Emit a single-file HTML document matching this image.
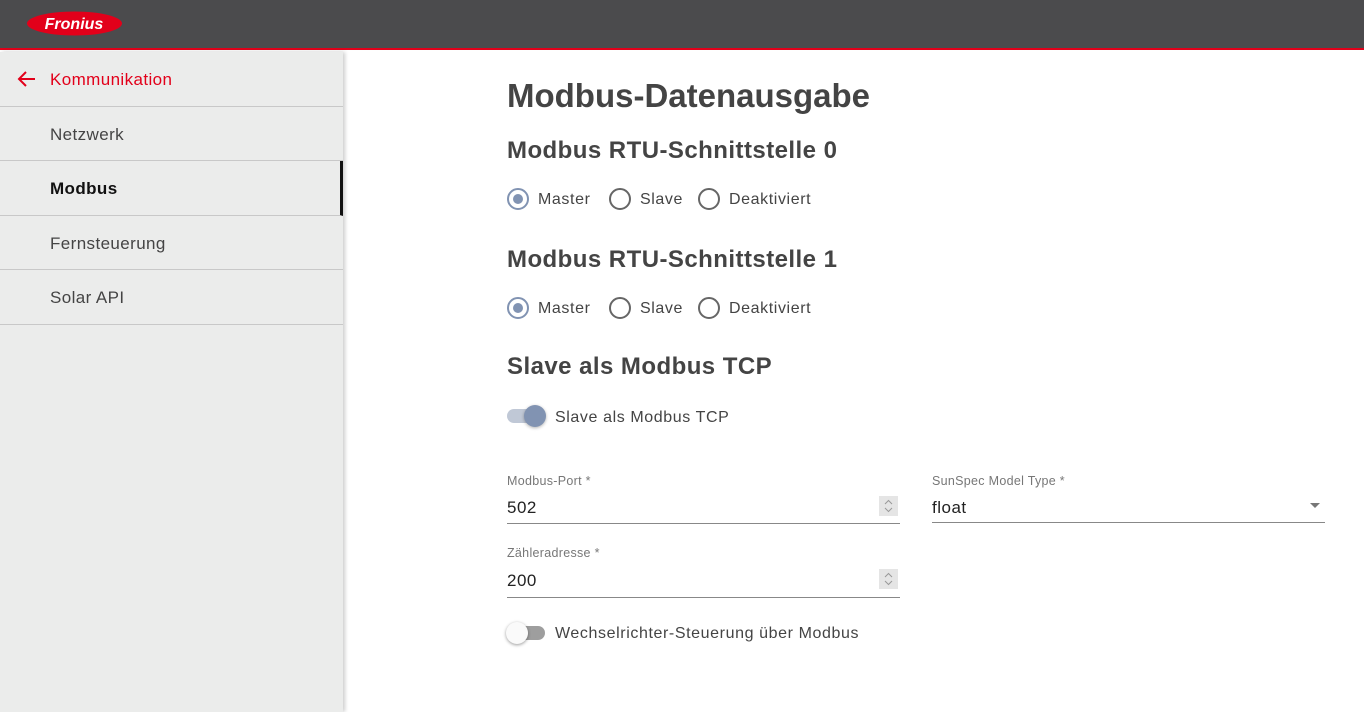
<!DOCTYPE html>
<html><head><meta charset="utf-8"><style>
*{box-sizing:border-box;margin:0;padding:0}
body{width:1364px;height:712px;overflow:hidden;font-family:"Liberation Sans",sans-serif;background:#fff;position:relative;color:#444}
.top{position:absolute;left:0;top:0;width:1364px;height:50px;background:#4b4b4d;border-bottom:2px solid #e2001a}
.side{position:absolute;left:0;top:52px;width:343px;height:660px;background:#ebeceb;box-shadow:2px 0 4px rgba(0,0,0,.2)}
.item{height:54.5px;border-bottom:1px solid #c8c8c8;padding-left:50px;line-height:55px;font-size:17px;color:#444;letter-spacing:0.4px}
.a{position:absolute;font-size:16px;letter-spacing:0.6px}
h1{position:absolute;left:507px;top:77px;font-size:33px;font-weight:bold;color:#444}
h2{position:absolute;left:507px;font-size:24px;font-weight:bold;color:#444;letter-spacing:0.45px}
.r{position:absolute;width:22px;height:22px;border:2px solid #666;border-radius:50%}
.r.on{border-color:#8193b2}
.r.on:after{content:"";position:absolute;left:4px;top:4px;width:10px;height:10px;border-radius:50%;background:#8193b2}
.lbl{position:absolute;font-size:12.5px;color:#777;letter-spacing:0.3px}
.val{position:absolute;font-size:17px;color:#222;letter-spacing:0.5px}
.line{position:absolute;height:1px;background:#888}
.spin{position:absolute;width:19px;height:20px;background:#e5e5e5}
</style></head><body>
<div class="top">
<svg style="position:absolute;left:27px;top:11px" width="95" height="25"><ellipse cx="47.5" cy="12.5" rx="47.5" ry="12" fill="#e2001a"/><text x="47" y="18" text-anchor="middle" fill="#fff" font-size="16" font-style="italic" font-weight="bold" font-family="Liberation Sans">Fronius</text></svg>
</div>
<div class="side">
<div class="item" style="color:#e2001a;padding-left:50px;position:relative"><svg style="position:absolute;left:16px;top:18px" width="20" height="18"><path d="M19 9H3M10 2L3 9L10 16" stroke="#e2001a" stroke-width="2" fill="none"/></svg>Kommunikation</div>
<div class="item">Netzwerk</div>
<div class="item" style="font-weight:bold;color:#111;border-right:3px solid #111">Modbus</div>
<div class="item">Fernsteuerung</div>
<div class="item">Solar API</div>
</div>
<h1>Modbus-Datenausgabe</h1>
<h2 style="top:137px">Modbus RTU-Schnittstelle 0</h2>
<div class="r on" style="left:507px;top:188px"></div><div class="a" style="left:538px;top:191px">Master</div>
<div class="r" style="left:609px;top:188px"></div><div class="a" style="left:640px;top:191px">Slave</div>
<div class="r" style="left:698px;top:188px"></div><div class="a" style="left:729px;top:191px">Deaktiviert</div>
<h2 style="top:246px">Modbus RTU-Schnittstelle 1</h2>
<div class="r on" style="left:507px;top:297px"></div><div class="a" style="left:538px;top:300px">Master</div>
<div class="r" style="left:609px;top:297px"></div><div class="a" style="left:640px;top:300px">Slave</div>
<div class="r" style="left:698px;top:297px"></div><div class="a" style="left:729px;top:300px">Deaktiviert</div>
<h2 style="top:353px">Slave als Modbus TCP</h2>
<div style="position:absolute;left:507px;top:409px;width:38px;height:14px;border-radius:7px;background:#c0c8d6"></div>
<div style="position:absolute;left:524px;top:405px;width:22px;height:22px;border-radius:50%;background:#8193b2;box-shadow:0 1px 3px rgba(0,0,0,.3)"></div>
<div class="a" style="left:555px;top:409px">Slave als Modbus TCP</div>
<div class="lbl" style="left:507px;top:474px">Modbus-Port *</div>
<div class="val" style="left:507px;top:498px">502</div>
<div class="spin" style="left:879px;top:496px"><svg width="19" height="20"><path d="M6 8L9.5 4.5L13 8M6 12L9.5 15.5L13 12" stroke="#999" stroke-width="1" fill="none"/></svg></div>
<div class="line" style="left:507px;top:523px;width:393px"></div>
<div class="lbl" style="left:932px;top:474px">SunSpec Model Type *</div>
<div class="val" style="left:932px;top:498px">float</div>
<div style="position:absolute;left:1310px;top:503px;border-left:5px solid transparent;border-right:5px solid transparent;border-top:5px solid #777"></div>
<div class="line" style="left:932px;top:522px;width:393px"></div>
<div class="lbl" style="left:507px;top:546px">Zähleradresse *</div>
<div class="val" style="left:507px;top:571px">200</div>
<div class="spin" style="left:879px;top:569px"><svg width="19" height="20"><path d="M6 8L9.5 4.5L13 8M6 12L9.5 15.5L13 12" stroke="#999" stroke-width="1" fill="none"/></svg></div>
<div class="line" style="left:507px;top:597px;width:393px"></div>
<div style="position:absolute;left:507px;top:626px;width:38px;height:14px;border-radius:7px;background:#9e9e9e"></div>
<div style="position:absolute;left:506px;top:622px;width:22px;height:22px;border-radius:50%;background:#fafafa;box-shadow:0 1px 3px rgba(0,0,0,.4)"></div>
<div class="a" style="left:555px;top:625px">Wechselrichter-Steuerung über Modbus</div>
</body></html>
